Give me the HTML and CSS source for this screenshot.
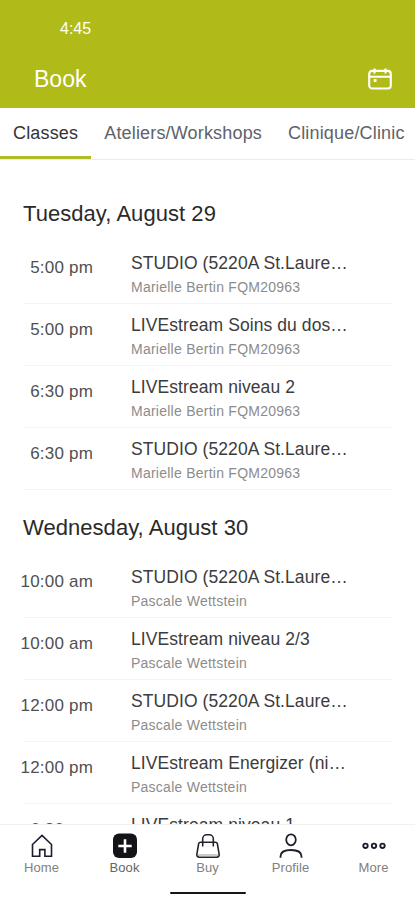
FILE: index.html
```html
<!DOCTYPE html>
<html lang="en">
    <head>
        <meta charset="UTF-8" />
        <meta name="viewport" content="width=device-width, initial-scale=1.0" />
        <title>Book</title>
        <link rel="stylesheet" href="styles.css">
    </head>
    <body>
        <header class="header">
            <div class="status">4:45</div>
            <div class="title-bar">
                <h1>Book</h1>
                <svg class="calendar" width="26" height="24" viewBox="0 0 26 24" fill="none" stroke="#fff" stroke-width="2.1">
                    <rect x="2.2" y="3.9" width="21.6" height="17.6" rx="3" />
                    <path d="M2 9.7h22M7.5 1.5v5M18.5 1.5v5" />
                    <path d="M6.7 13.5h2.8" stroke-width="3" />
                </svg>
            </div>
        </header>
        <nav class="tabs">
            <a class="tab active">Classes</a>
            <a class="tab">Ateliers/Workshops</a>
            <a class="tab">Clinique/Clinic</a>
        </nav>
        <main class="schedule">
            <section class="day">
                <h2>Tuesday, August 29</h2>
                <div class="row">
                    <span class="time">5:00 pm</span>
                    <div class="info"><p class="name">STUDIO (5220A St.Laure…</p><p class="teacher">Marielle Bertin FQM20963</p></div>
                </div>
                <div class="row">
                    <span class="time">5:00 pm</span>
                    <div class="info"><p class="name">LIVEstream Soins du dos…</p><p class="teacher">Marielle Bertin FQM20963</p></div>
                </div>
                <div class="row">
                    <span class="time">6:30 pm</span>
                    <div class="info"><p class="name">LIVEstream niveau 2</p><p class="teacher">Marielle Bertin FQM20963</p></div>
                </div>
                <div class="row">
                    <span class="time">6:30 pm</span>
                    <div class="info"><p class="name">STUDIO (5220A St.Laure…</p><p class="teacher">Marielle Bertin FQM20963</p></div>
                </div>
            </section>
            <section class="day">
                <h2>Wednesday, August 30</h2>
                <div class="row">
                    <span class="time">10:00 am</span>
                    <div class="info"><p class="name">STUDIO (5220A St.Laure…</p><p class="teacher">Pascale Wettstein</p></div>
                </div>
                <div class="row">
                    <span class="time">10:00 am</span>
                    <div class="info"><p class="name">LIVEstream niveau 2/3</p><p class="teacher">Pascale Wettstein</p></div>
                </div>
                <div class="row">
                    <span class="time">12:00 pm</span>
                    <div class="info"><p class="name">STUDIO (5220A St.Laure…</p><p class="teacher">Pascale Wettstein</p></div>
                </div>
                <div class="row">
                    <span class="time">12:00 pm</span>
                    <div class="info"><p class="name">LIVEstream Energizer (ni…</p><p class="teacher">Pascale Wettstein</p></div>
                </div>
                <div class="row">
                    <span class="time">6:30 pm</span>
                    <div class="info"><p class="name">LIVEstream niveau 1</p></div>
                </div>
            </section>
        </main>
        <footer class="bottom">
            <nav class="menu">
                <a class="item">
                    <svg width="26" height="26" viewBox="0 0 26 26" fill="none" stroke="#1c1c30" stroke-width="1.6">
                        <path d="M3.5 11.5 13 2.4l9.5 9.1v11.7h-6.6v-6.6h-5.2v6.6H3.5z" />
                    </svg>
                    <span>Home</span>
                </a>
                <a class="item current">
                    <svg width="26" height="26" viewBox="0 0 26 26">
                        <rect x="1" y="0.6" width="24" height="24.4" rx="6" fill="#141418" />
                        <path d="M13 6.3v13.4M6.3 13h13.4" stroke="#fff" stroke-width="2.6" />
                    </svg>
                    <span>Book</span>
                </a>
                <a class="item">
                    <svg width="26" height="26" viewBox="0 0 26 26" fill="none" stroke="#24242e" stroke-width="1.6" stroke-linejoin="round">
                        <path d="M5.5 9.2h15q1.6 0 1.9 1.6l1.8 10.800q0 2.600-2.400 2.600H4.2q-2.400 0-2.400-2.600l1.800-10.800q.3-1.600 1.900-1.600z" />
                        <path d="M2.500 22h21" stroke-width="1" stroke="#999" />
                        <path d="M7.700 13.500V5.800a4 4 0 0 1 4-4h2.600a4 4 0 0 1 4 4v7.700" />
                    </svg>
                    <span>Buy</span>
                </a>
                <a class="item">
                    <svg width="26" height="26" viewBox="0 0 26 26" fill="none" stroke="#20202c" stroke-width="1.8">
                        <ellipse cx="13" cy="6.8" rx="4.8" ry="5.5" />
                        <path d="M2.5 24.8v-1.3c0-4 4-6.5 10.5-6.5s10.5 2.5 10.5 6.500v1.3" />
                    </svg>
                    <span>Profile</span>
                </a>
                <a class="item">
                    <svg width="26" height="26" viewBox="0 0 26 26" fill="none" stroke="#1c1c30" stroke-width="1.9">
                        <circle cx="4.5" cy="12.8" r="2.2" />
                        <circle cx="13" cy="12.8" r="2.2" />
                        <circle cx="21.5" cy="12.8" r="2.2" />
                    </svg>
                    <span>More</span>
                </a>
            </nav>
            <div class="home-bar"></div>
        </footer>
    </body>
</html>
```
FILE: styles.css
```css
* {
    padding: 0;
    margin: 0;
    box-sizing: border-box;
}
body {
    height: 900px;
    display: flex;
    flex-direction: column;
    overflow: hidden;
    background-color: #fff;
    font-family: "Liberation Sans", Arial, sans-serif;
}
.header {
    flex: none;
    height: 108px;
    background-color: #b0bb1a;
    color: #fff;
}
.status {
    padding: 19px 0 0 60px;
    font-size: 16px;
    line-height: 19px;
}
.title-bar {
    display: flex;
    justify-content: space-between;
    align-items: center;
    height: 30px;
    margin-top: 26px;
    padding: 0 22px 0 34px;
}
h1 {
    font-size: 23px;
    font-weight: 400;
    line-height: 30px;
}
.tabs {
    flex: none;
    display: flex;
    height: 52px;
    border-bottom: 1px solid #e9ebed;
    white-space: nowrap;
}
.tab {
    height: 51px;
    padding: 0 13px;
    font-size: 18px;
    line-height: 51px;
    letter-spacing: 0.17px;
    color: #606268;
}
.tab.active {
    border-bottom: 3px solid #b0bb2c;
    color: #333337;
}
.schedule {
    flex: 1;
    min-height: 0;
    overflow: hidden;
    padding: 40px 23px 0;
}
h2 {
    height: 42px;
    font-size: 22px;
    font-weight: 400;
    line-height: 28px;
    letter-spacing: 0.05px;
    color: #2a2a2a;
}
.day + .day {
    margin-top: 24px;
}
.row {
    display: flex;
    height: 62px;
    border-bottom: 1px solid #f3f3f3;
}
.time {
    flex: none;
    width: 73px;
    margin: 16px 0 0 -3px;
    text-align: right;
    white-space: nowrap;
    font-size: 17px;
    line-height: 20px;
    letter-spacing: 0.2px;
    color: #505050;
}
.info {
    padding: 10px 0 0 38px;
    white-space: nowrap;
}
.name {
    font-size: 17.5px;
    line-height: 22px;
    letter-spacing: 0.08px;
    color: #3c3c3c;
}
.teacher {
    margin-top: 4px;
    font-size: 14px;
    line-height: 18px;
    letter-spacing: 0.25px;
    color: #8c8c8c;
}
.bottom {
    flex: none;
    height: 76px;
    border-top: 1px solid #f0f0f0;
    background-color: #fff;
}
.menu {
    display: flex;
    padding-top: 8px;
}
.item {
    flex: 1;
    display: flex;
    flex-direction: column;
    align-items: center;
    font-size: 13px;
    line-height: 16px;
    letter-spacing: 0.1px;
    color: #808080;
}
.item span {
    margin-top: 1px;
}
.item.current {
    color: #666;
}
.home-bar {
    width: 76px;
    height: 2px;
    margin: 16px auto 0;
    border-radius: 1px;
    background-color: #151515;
}
```
